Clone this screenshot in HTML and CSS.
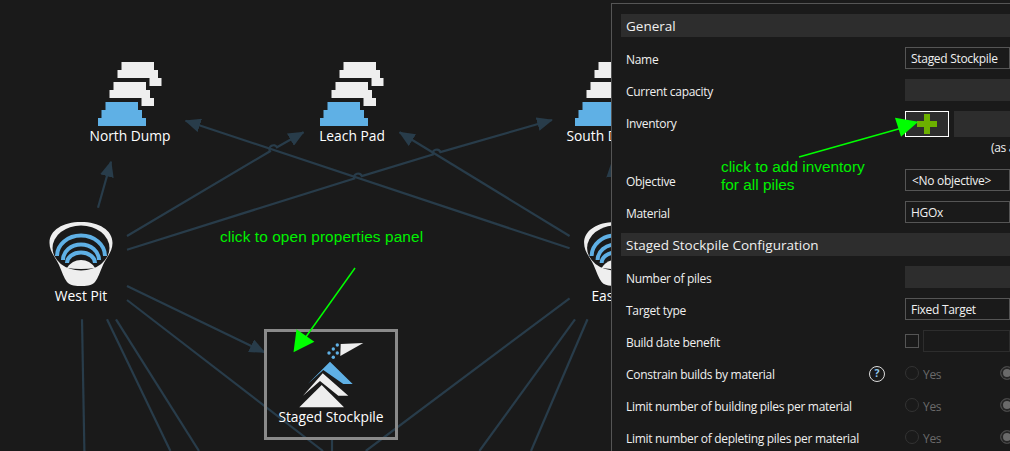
FILE: index.html
```html
<!DOCTYPE html>
<html lang="en">
<head>
    <meta charset="UTF-8">
    <meta name="viewport" content="width=device-width, initial-scale=1.0">
    <title>Staged Stockpile</title>
    <link rel="stylesheet" href="styles.css">
</head>
<body>
    <div class="canvas">
        <svg class="edges" width="1010" height="451" viewBox="0 0 1010 451">
            <defs>
                <marker id="head" markerUnits="userSpaceOnUse" markerWidth="16" markerHeight="14" refX="15" refY="7" orient="auto">
                    <path d="M0 0L16 7L0 14Z" fill="#283c4a"/>
                </marker>
                <g id="dump">
                    <path class="white" d="M121.5 62H154V70H158V78H161.5V86H149.5V78H117.5V70H121.5Z"/>
                    <path class="white" d="M113.5 82H146V90H150V98H154V106H141.5V98H109.5V90H113.5Z"/>
                    <path class="blue" d="M105.5 102H138V110H142V118H146V126H98V118H101.5V110H105.5Z"/>
                </g>
                <g id="pit">
                    <path class="white" d="M49.5 243C49.5 230 63 222 81 222C99 222 112.5 230 112.5 243C112.5 252 106 258 103 265C100 272 98 278 95 282C92 286 85 286 81 286C77 286 70 286 67 282C64 278 62 272 59 265C56 258 49.5 252 49.5 243Z"/>
                    <ellipse cx="81" cy="248" rx="28.5" ry="22.5" fill="#1a1a1a"/>
                    <path class="arc" d="M57 256A24 20.500 0 0 1 105 256"/>
                    <path class="arc" d="M63 260A18 15.500 0 0 1 99 260"/>
                    <path class="arc" d="M67 263A14 10.500 0 0 1 95 263"/>
                    <path class="white" d="M67 268Q72 260 81 260Q90 260 95 268Q81 270 67 268Z"/>
                </g>
            </defs>
            <g class="lines">
                <path marker-end="url(#head)" d="M98 207.700L111 161.700"/>
                <path marker-end="url(#head)" d="M127 236L270 151.300A4 4 0 0 1 277 147.300L303.500 132.300"/>
                <path marker-end="url(#head)" d="M127 249.700L354.200 178.500A4 4 0 0 1 361.800 176.100L432.800 154.500A4 4 0 0 1 440.400 152.100L552 120"/>
                <path marker-end="url(#head)" d="M569.600 248.300L185.600 120.700"/>
                <path marker-end="url(#head)" d="M569.600 236L399.600 132.300"/>
                <path marker-end="url(#head)" d="M127 286L264.600 352.300"/>
                <path marker-end="url(#head)" d="M616 208L612 162"/>
                <path d="M127 300L323 451"/>
                <path d="M116 319.300L199 451"/>
                <path d="M107 319.300L170.400 451"/>
                <path d="M82 319.300L84.400 451"/>
                <path d="M332 440V451"/>
                <path d="M569.600 298.300L365.800 451"/>
                <path d="M575 319.300L479.400 451"/>
                <path d="M587.500 319.300L531 451"/>
            </g>
            <use href="#dump"/>
            <use href="#dump" x="222"/>
            <use href="#dump" x="477"/>
            <use href="#pit"/>
            <use href="#pit" x="534.600"/>
            <rect class="selected" x="265.500" y="330.500" width="131" height="108"/>
            <path class="white" d="M340.700 344L363.300 343L340.300 356Z"/>
            <g class="blue">
                <circle cx="337.300" cy="345" r="1.700"/>
                <circle cx="333.300" cy="349" r="1.700"/>
                <circle cx="329" cy="353" r="1.700"/>
                <circle cx="337.300" cy="353" r="1.700"/>
                <circle cx="333.300" cy="357.300" r="1.700"/>
            </g>
            <path class="blue" d="M330 361.700L352.700 384H343.300L323.300 370L307.700 384Z"/>
            <path class="white" d="M322.700 373.300L348.300 395.700H338.300L320 381L303 395.700Z"/>
            <path class="white" d="M321.700 385L344 407.300H299.300Z"/>
        </svg>

        <div class="node-label dump-north">North Dump</div>
        <div class="node-label dump-leach">Leach Pad</div>
        <div class="node-label dump-south">South Dump</div>
        <div class="node-label pit-west">West Pit</div>
        <div class="node-label pit-east">East Pit</div>
        <div class="node-label staged">Staged Stockpile</div>
    </div>

    <div class="panel">
        <div class="section-head">General</div>
        <div class="rows">
            <div class="row">
                <div class="label">Name</div>
                <div class="field bordered">Staged Stockpile</div>
            </div>
            <div class="row">
                <div class="label">Current capacity</div>
                <div class="field filled"></div>
            </div>
            <div class="row inventory-row">
                <div class="label">Inventory</div>
                <div class="inventory">
                    <button class="add-btn" type="button">
                        <svg width="20" height="20" viewBox="0 0 20 20">
                            <path d="M7 0H13V7H20V13H13V20H7V13H0V7H7Z" fill="#6cb000"/>
                        </svg>
                    </button>
                    <div class="field filled"></div>
                </div>
            </div>
            <div class="note">(as at start)</div>
            <div class="row">
                <div class="label">Objective</div>
                <div class="field bordered select">&lt;No objective&gt;</div>
            </div>
            <div class="row">
                <div class="label">Material</div>
                <div class="field bordered">HGOx</div>
            </div>
        </div>

        <div class="section-head">Staged Stockpile Configuration</div>
        <div class="rows">
            <div class="row">
                <div class="label">Number of piles</div>
                <div class="field filled"></div>
            </div>
            <div class="row">
                <div class="label">Target type</div>
                <div class="field bordered">Fixed Target</div>
            </div>
            <div class="row">
                <div class="label">Build date benefit</div>
                <div class="date-benefit">
                    <span class="checkbox"></span>
                    <div class="field dim"></div>
                </div>
            </div>
            <div class="row">
                <div class="label">Constrain builds by material <span class="help">?</span></div>
                <div class="radios"><span class="radio"></span><span class="yes">Yes</span><span class="radio on"></span></div>
            </div>
            <div class="row">
                <div class="label">Limit number of building piles per material</div>
                <div class="radios"><span class="radio"></span><span class="yes">Yes</span><span class="radio on"></span></div>
            </div>
            <div class="row">
                <div class="label">Limit number of depleting piles per material</div>
                <div class="radios"><span class="radio"></span><span class="yes">Yes</span><span class="radio on"></span></div>
            </div>
        </div>
    </div>

    <!-- Annotations drawn on top of the screenshot -->
    <svg class="arrows" width="1010" height="451" viewBox="0 0 1010 451">
        <path d="M355 268L303 341" stroke="#00ff00" stroke-width="1.500"/>
        <path d="M296.500 329.300L314.400 341.700L293.500 352.300Z" fill="#00ff00"/>
        <path d="M799 157L902 128" stroke="#00ff00" stroke-width="1.500"/>
        <path d="M895 117.700L918.300 121.700L901 136.700Z" fill="#00ff00"/>
    </svg>
    <div class="note-green note-open">click to open properties panel</div>
    <div class="note-green note-add">click to add inventory<br>for all piles</div>
</body>
</html>
```

FILE: styles.css
```css
/* General Styles */
html, body {
    height: 100%;
}

body {
    margin: 0;
    background-color: #1a1a1a;
    font-family: "Open Sans", sans-serif;
    color: #f0f0f0;
    overflow: hidden;
    position: relative;
}

/* Diagram */
.canvas {
    position: absolute;
    top: 0;
    left: 0;
    width: 611px;
    height: 451px;
    overflow: hidden;
}

.edges {
    display: block;
}

.lines path {
    fill: none;
    stroke: #283c4a;
    stroke-width: 2.200;
}

.white {
    fill: #eeeeee;
}

.blue {
    fill: #5fb0e5;
}

.arc {
    fill: none;
    stroke: #5fb0e5;
    stroke-width: 4;
}

.selected {
    fill: none;
    stroke: #8a8a8a;
    stroke-width: 3;
}

.node-label {
    position: absolute;
    width: 140px;
    margin-left: -70px;
    text-align: center;
    font-size: 13.800px;
    font-weight: 500;
    line-height: 18px;
    color: #fff;
}

.dump-north { left: 130px; top: 127px; }
.dump-leach { left: 352px; top: 127px; }
.dump-south { left: 607px; top: 127px; }
.pit-west { left: 81px; top: 287px; }
.pit-east { left: 615px; top: 287px; }
.staged { left: 331px; top: 408px; }

/* Properties Panel */
.panel {
    position: absolute;
    top: 3px;
    left: 611px;
    width: 399px;
    height: 448px;
    box-sizing: border-box;
    padding: 10px 0 0 9px;
    background-color: #1a1a1a;
    border-top: 1px solid #555;
    border-left: 1px solid #555;
    font-size: 12px;
    letter-spacing: -0.3px;
    overflow: hidden;
}

.section-head {
    height: 23px;
    line-height: 25px;
    padding-left: 5px;
    background-color: #2d2d2d;
    font-size: 13.500px;
    letter-spacing: 0;
}

.rows {
    display: flex;
    flex-direction: column;
    gap: 10px;
    padding: 10px 0;
}

.row {
    display: grid;
    grid-template-columns: 284px 105px;
    height: 22px;
    align-items: center;
}

.label {
    padding: 2px 20px 0 5px;
    display: flex;
    justify-content: space-between;
    align-items: center;
    white-space: nowrap;
}

.field {
    box-sizing: border-box;
    height: 22px;
    line-height: 22px;
    padding-left: 5px;
    width: 100%;
}

.field.bordered {
    border: 1px solid #555;
}

.field.select {
    padding-left: 6px;
}

.field.filled {
    background-color: #2d2d2d;
}

.field.dim {
    border: 1px solid #2d2d2d;
}

/* Inventory */
.inventory-row {
    height: 26px;
}

.inventory-row .label {
    padding-top: 0;
    padding-bottom: 2px;
}

.inventory {
    display: flex;
    gap: 5px;
    height: 26px;
}

.inventory .field {
    height: 26px;
}

.add-btn {
    flex: none;
    width: 44px;
    height: 26px;
    padding: 0;
    display: flex;
    justify-content: center;
    align-items: center;
    background-color: #2d2d2d;
    border: 1px solid #fff;
}

.note {
    height: 18px;
    line-height: 14px;
    padding-left: 370px;
    margin-top: -6px;
    white-space: nowrap;
}

/* Small controls */
.date-benefit {
    display: flex;
    align-items: center;
    gap: 4px;
}

.checkbox {
    flex: none;
    box-sizing: border-box;
    width: 14px;
    height: 14px;
    border: 1px solid #555;
}

.help {
    box-sizing: border-box;
    width: 16px;
    height: 16px;
    line-height: 13px;
    text-align: center;
    border: 1.500px solid #ddd;
    border-radius: 50%;
    font-size: 10.500px;
    font-weight: 700;
    letter-spacing: 0;
    color: #8fc6ea;
}

.radios {
    display: flex;
    align-items: center;
}

.radio {
    flex: none;
    box-sizing: border-box;
    width: 14px;
    height: 14px;
    border: 1px solid #333;
    border-radius: 50%;
}

.radio.on {
    background-color: #6a6a6a;
    border-color: #444;
    box-shadow: inset 0 0 0 2px #262626;
}

.yes {
    flex: none;
    width: 81px;
    padding: 2px 0 0 4px;
    box-sizing: border-box;
    color: #6a6a6a;
}

/* Green annotations */
.arrows {
    position: absolute;
    top: 0;
    left: 0;
    pointer-events: none;
}

.note-green {
    position: absolute;
    font-family: "Liberation Sans", Arial, sans-serif;
    font-size: 15.400px;
    line-height: 18px;
    color: #00f000;
    white-space: nowrap;
}

.note-open {
    left: 220px;
    top: 228px;
    letter-spacing: 0.100px;
}

.note-add {
    left: 721px;
    top: 158px;
}
```
